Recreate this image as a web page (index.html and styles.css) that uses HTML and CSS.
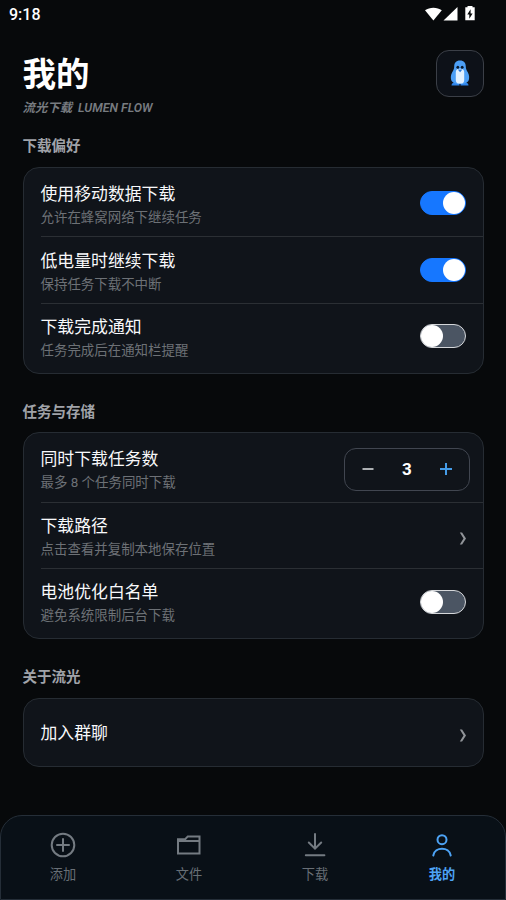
FILE: index.html
```html
<!DOCTYPE html>
<html lang="zh-CN">
<head>
<meta charset="utf-8">
<title>我的</title>
<link rel="stylesheet" href="styles.css">
</head>
<body>
<div class="screen">
  <div class="status">
    <span class="clock">9:18</span>
    <svg class="status-icons" width="52" height="18" viewBox="0 0 52 18" fill="#fff">
      <path d="M0 4.200C4.600.8 12.200.8 16.800 4.200L8.400 14.500Z"/>
      <path d="M18.500 14.500L32.500 1v13.500Z"/>
      <path fill-rule="evenodd" d="M42.500 0h5v1.300h2.200v13H40.300v-13h2.200zM45.600 3.300L42.300 8.500h2v4.200l3.300-5.200h-2z"/>
    </svg>
  </div>
  <header class="header">
    <div>
      <h1>我的</h1>
      <p class="tagline">流光下载<span class="tagline-en">LUMEN FLOW</span></p>
    </div>
    <div class="avatar">
      <svg width="20" height="26" viewBox="0 0 20 26">
        <path fill="#2f86ec" d="M1.500 25.500q0-3 4-3.500h3.200q.8 0 .8 3.500zM18.500 25.500q0-3-4-3.500h-3.200q-.8 0-.8 3.500z"/>
        <path fill="#4c9ff6" d="M10 .5C6 .5 4.200 3 4.200 6.500c0 2.500-.8 3.800-2 5.800C.6 15 .4 18.500 1.600 21c1.800 2.500 5 3 8.400 3s6.600-.5 8.400-3c1.200-2.500 1-6-.6-8.700-1.200-2-2-3.300-2-5.800C15.800 3 14 .5 10 .5z"/>
        <rect fill="#e2f1ff" x="5.800" y="8.800" width="8.400" height="14.700" rx="3.600"/>
        <ellipse fill="#07182c" cx="7.800" cy="7.200" rx="1.400" ry="1.500"/>
        <ellipse fill="#07182c" cx="12.200" cy="7.200" rx="1.400" ry="1.500"/>
        <path fill="#2878dc" d="M7.800 9.600h4.600L10.100 12.300z"/>
      </svg>
    </div>
  </header>

  <main class="content">
    <h2>下载偏好</h2>
    <section class="card">
      <div class="row"><div class="copy"><h3>使用移动数据下载</h3><p>允许在蜂窝网络下继续任务</p></div><span class="switch on"></span></div>
      <div class="row"><div class="copy"><h3>低电量时继续下载</h3><p>保持任务下载不中断</p></div><span class="switch on"></span></div>
      <div class="row"><div class="copy"><h3>下载完成通知</h3><p>任务完成后在通知栏提醒</p></div><span class="switch"></span></div>
    </section>

    <h2>任务与存储</h2>
    <section class="card">
      <div class="row"><div class="copy"><h3>同时下载任务数</h3><p>最多 8 个任务同时下载</p></div>
        <div class="stepper">
          <svg width="14" height="14" viewBox="0 0 14 14"><path d="M1.500 7h11" stroke="#adb0b3" stroke-width="2"/></svg>
          <span>3</span>
          <svg width="14" height="14" viewBox="0 0 14 14"><path d="M1 7h12M7 1v12" stroke="#459ce8" stroke-width="2"/></svg>
        </div>
      </div>
      <div class="row"><div class="copy"><h3>下载路径</h3><p>点击查看并复制本地保存位置</p></div>
        <svg class="chevron" width="8" height="13" viewBox="0 0 8 13"><path d="M0.800.4h2.300L7 6.500 3.100 12.600H.8L4.500 6.500Z"/></svg>
      </div>
      <div class="row"><div class="copy"><h3>电池优化白名单</h3><p>避免系统限制后台下载</p></div><span class="switch"></span></div>
    </section>

    <h2>关于流光</h2>
    <section class="card single">
      <div class="row"><div class="copy"><h3>加入群聊</h3></div>
        <svg class="chevron" width="8" height="13" viewBox="0 0 8 13"><path d="M0.800.4h2.300L7 6.500 3.100 12.600H.8L4.500 6.500Z"/></svg>
      </div>
    </section>
  </main>

  <nav class="nav">
    <div class="tab">
      <svg width="28" height="28" viewBox="0 0 28 28"><circle cx="14" cy="14" r="11.300"/><path d="M14 8v12M8 14h12"/></svg>
      <span>添加</span>
    </div>
    <div class="tab">
      <svg width="28" height="28" viewBox="0 0 28 28"><path d="M3 22.500V8.200h7.200l2.600-2.800h11.700v17.100zM3 10.100h21.500"/></svg>
      <span>文件</span>
    </div>
    <div class="tab">
      <svg width="28" height="28" viewBox="0 0 28 28"><path d="M14 3v14.500M7.800 11.500L14 17.700l6.200-6.200M4.800 24.300h18.600"/></svg>
      <span>下载</span>
    </div>
    <div class="tab active">
      <svg width="28" height="28" viewBox="0 0 28 28"><circle cx="14" cy="8.700" r="4.500"/><path d="M5.300 24.500C6.800 15.500 21.200 15.500 22.700 24.500"/></svg>
      <span>我的</span>
    </div>
  </nav>
</div>
</body>
</html>
```
FILE: styles.css
```css
* { box-sizing: border-box; }
body, h1, h2, h3, p { margin: 0; }
body {
  background: #07090b;
  color: #fff;
  font-family: Roboto, "Noto Sans CJK SC", sans-serif;
}
.screen {
  height: 900px;
  display: flex;
  flex-direction: column;
  overflow: hidden;
}
.status {
  height: 29px;
  flex: none;
  display: flex;
  justify-content: space-between;
  padding: 5px 29px 0 9px;
}
.clock {
  font-size: 16px;
  line-height: 19px;
  font-weight: 500;
}
.status-icons { margin-top: 1px; }
.header {
  height: 101px;
  flex: none;
  display: flex;
  justify-content: space-between;
  padding: 20.500px 22.500px 0 22.500px;
}
h1 {
  padding-top: 1px;
  font-size: 33.500px;
  line-height: 48px;
  font-weight: 700;
}
.tagline {
  font-size: 12.400px;
  line-height: 18px;
  font-weight: 600;
  font-style: italic;
  color: #777b80;
}
.tagline-en { margin-left: 6px; }
.avatar {
  width: 47.500px;
  height: 47.500px;
  display: flex;
  align-items: center;
  justify-content: center;
  border: 1px solid #3b3f47;
  border-radius: 13px;
  background: #0d1118;
}
.content {
  flex: 1;
  padding: 0 22.500px;
}
h2 {
  height: 36.500px;
  padding-top: 6px;
  font-size: 14.500px;
  line-height: 22px;
  font-weight: 700;
  color: #a0a3a9;
}
.card {
  height: 207px;
  margin-bottom: 22px;
  display: grid;
  grid-auto-rows: 66.400px;
  padding: 2.500px 0 0 17px;
  border: 1px solid #262c33;
  border-radius: 16px;
  background: #10141a;
}
.row {
  display: flex;
  align-items: center;
  justify-content: space-between;
  padding-right: 16.500px;
}
.row + .row { border-top: 1px solid #2b2f34; }
h3 {
  font-size: 16.850px;
  line-height: 24px;
  font-weight: 400;
  color: #f8f9fb;
}
.copy { padding-top: 4px; }
.copy p {
  margin-top: 1px;
  font-size: 13.450px;
  line-height: 22px;
  color: #6d7176;
}
.switch {
  width: 46px;
  height: 24px;
  display: flex;
  align-items: center;
  border: 1px solid #d5d7da;
  border-radius: 12px;
  background: #4b5563;
}
.switch::before {
  content: "";
  width: 22px;
  height: 22px;
  border-radius: 50%;
  background: #fff;
}
.switch.on {
  justify-content: flex-end;
  border-color: #1677ff;
  background: #1677ff;
}
.stepper {
  width: 126px;
  height: 43px;
  margin: 1px -4px 0 0;
  display: flex;
  align-items: center;
  justify-content: space-between;
  padding: 0 16px;
  border: 1px solid #414650;
  border-radius: 12px;
  font-size: 17px;
  font-weight: 700;
}
.chevron {
  margin: 5px -1px 0 0;
  fill: #919499;
}
.card.single {
  height: 69px;
  grid-auto-rows: 66px;
  padding-top: 1px;
}
.single .copy { padding-top: 0; }
.nav {
  height: 85.500px;
  flex: none;
  display: grid;
  grid-template-columns: repeat(4, 1fr);
  padding-top: 15.500px;
  border: 1px solid #252e38;
  border-radius: 22px 22px 0 0;
  background: #091017;
}
.tab {
  display: flex;
  flex-direction: column;
  align-items: center;
  padding-right: 2px;
  color: #686f76;
  font-size: 13.200px;
  line-height: 20px;
}
.tab svg {
  fill: none;
  stroke: #747b82;
  stroke-width: 2;
  stroke-linecap: round;
}
.tab span { margin-top: 5.500px; }
.tab.active {
  padding: 0;
  color: #4da3f5;
  font-weight: 700;
}
.tab.active svg { stroke: #4da3f5; }
```
